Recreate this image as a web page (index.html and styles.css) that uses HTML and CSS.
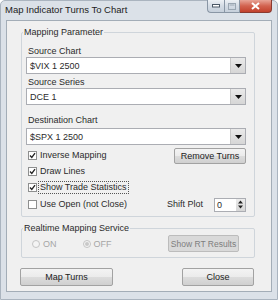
FILE: index.html
```html
<!DOCTYPE html>
<html>
<head>
<meta charset="utf-8">
<link rel="stylesheet" href="styles.css">
</head>
<body>
<div class="window">
  <div class="titlebar">
    <span class="title">Map Indicator Turns To Chart</span>
    <div class="caption-btns">
      <span class="cbtn min"><svg width="8" height="4" viewBox="0 0 8 4"><rect x="0.5" y="0.5" width="7" height="2.5" fill="#fff" stroke="#4b5866"/></svg></span>
      <span class="cbtn max"><svg width="8" height="7" viewBox="0 0 8 7"><rect x="0.5" y="0.5" width="7" height="6" fill="none" stroke="#9aa6b2"/><rect x="1.5" y="1.5" width="5" height="1" fill="#9aa6b2"/></svg></span>
      <span class="cbtn close"><svg width="9" height="8" viewBox="0 0 9 8"><path d="M1 1 L8 7 M8 1 L1 7" stroke="#fff" stroke-width="2"/></svg></span>
    </div>
  </div>
  <div class="client">
    <div class="group group1">
      <span class="legend">Mapping Parameter</span>
      <div class="lbl l1">Source Chart</div>
      <div class="combo c1"><span class="val">$VIX 1 2500</span><span class="arrow"><svg width="7" height="4" viewBox="0 0 7 4"><path d="M0 0 H7 L3.5 4 Z" fill="#111"/></svg></span></div>
      <div class="lbl l2">Source Series</div>
      <div class="combo c2"><span class="val">DCE 1</span><span class="arrow"><svg width="7" height="4" viewBox="0 0 7 4"><path d="M0 0 H7 L3.5 4 Z" fill="#111"/></svg></span></div>
      <div class="lbl l3">Destination Chart</div>
      <div class="combo c3"><span class="val">$SPX 1 2500</span><span class="arrow"><svg width="7" height="4" viewBox="0 0 7 4"><path d="M0 0 H7 L3.5 4 Z" fill="#111"/></svg></span></div>
      <div class="row r1">
        <span class="chk on"><svg width="7" height="7" viewBox="0 0 7 7"><path d="M1 3.5 L2.8 5.5 L6 1.2" fill="none" stroke="#222" stroke-width="1.3"/></svg></span>
        <span class="ctext">Inverse Mapping</span>
        <span class="btn remove">Remove Turns</span>
      </div>
      <div class="row r2">
        <span class="chk on"><svg width="7" height="7" viewBox="0 0 7 7"><path d="M1 3.5 L2.8 5.5 L6 1.2" fill="none" stroke="#222" stroke-width="1.3"/></svg></span>
        <span class="ctext">Draw Lines</span>
      </div>
      <div class="row r3">
        <span class="chk on"><svg width="7" height="7" viewBox="0 0 7 7"><path d="M1 3.5 L2.8 5.5 L6 1.2" fill="none" stroke="#222" stroke-width="1.3"/></svg></span>
        <span class="ctext focus">Show Trade Statistics</span>
      </div>
      <div class="row r4">
        <span class="chk"></span>
        <span class="ctext">Use Open (not Close)</span>
        <span class="shift-lbl">Shift Plot</span>
        <span class="spin"><span class="val">0</span><span class="arrows"><svg width="5" height="9" viewBox="0 0 5 9"><path d="M0 3.5 H5 L2.5 0.5 Z M0 5.5 H5 L2.5 8.5 Z" fill="#222"/></svg></span></span>
      </div>
    </div>
    <div class="group group2">
      <span class="legend">Realtime Mapping Service</span>
      <div class="row rt">
        <span class="radio"></span><span class="rtext on-t">ON</span>
        <span class="radio sel"><span class="dot"></span></span><span class="rtext">OFF</span>
        <span class="btn disabled showrt">Show RT Results</span>
      </div>
    </div>
    <div class="footer">
      <span class="btn mapturns">Map Turns</span>
      <span class="btn close-btn">Close</span>
    </div>
  </div>
</div>
</body>
</html>
```
FILE: styles.css
```css
* { box-sizing: border-box; }
html, body { margin: 0; padding: 0; }
body {
  width: 278px;
  height: 300px;
  background: #fff;
  font-family: "Liberation Sans", Arial, sans-serif;
  font-size: 9px;
  color: #2b2b2b;
}
.window {
  width: 278px;
  height: 300px;
  background: #dbe1e8;
  border: 1px solid #aab4bf;
  border-radius: 5px 5px 0 0;
  display: flex;
  flex-direction: column;
}
.titlebar {
  height: 19px;
  display: flex;
  align-items: flex-start;
  justify-content: space-between;
}
.title {
  font-size: 9.5px;
  color: #222;
  margin: 3px 0 0 4px;
  line-height: 12px;
}
.caption-btns {
  display: flex;
  margin: -1px 5px 0 0;
  height: 13px;
}
.cbtn {
  display: flex;
  align-items: center;
  justify-content: center;
  height: 13px;
  border: 1px solid #8996a5;
  border-top: none;
  background: linear-gradient(#edf1f5, #d3dbe4 50%, #c6d0db);
}
.cbtn.min { width: 17px; border-radius: 0 0 0 4px; border-right: none; }
.cbtn.max { width: 16px; }
.cbtn.close {
  width: 32px;
  border-color: #8a3a30;
  border-left: none;
  border-radius: 0 0 4px 0;
  background: linear-gradient(#e8a497, #d2624f 50%, #c2412d);
}
.client {
  margin: 0 5px 0 5px;
  height: 272px;
  background: #f0f0f0;
  border: 1px solid #a3adb7;
  display: flex;
  flex-direction: column;
}
.group {
  position: relative;
  border: 1px solid #cfd5db;
  border-radius: 2px;
  margin-left: 14px;
  width: 234px;
}
.legend {
  position: absolute;
  top: -7px;
  left: 1px;
  padding: 0 1px;
  background: #f0f0f0;
  line-height: 12px;
  white-space: nowrap;
}
.group1 {
  margin-top: 11px;
  height: 185px;
  padding: 0 8px 0 4px;
}
.lbl { line-height: 10px; padding-left: 2px; }
.l1 { margin-top: 13px; }
.l2 { margin-top: 3px; }
.l3 { margin-top: 10px; }
.combo {
  height: 17px;
  background: #fff;
  border: 1px solid #abadb3;
  display: flex;
  align-items: center;
  justify-content: space-between;
  margin-top: 1px;
}
.c3 { margin-top: 3px; }
.combo .val { padding-left: 3px; line-height: 12px; }
.combo .arrow {
  width: 15px;
  height: 15px;
  background: linear-gradient(#eaeaea, #d6d6d6);
  border-left: 1px solid #c8c8c8;
  display: flex;
  align-items: center;
  justify-content: center;
}
.row {
  display: flex;
  align-items: center;
  height: 16px;
  padding-left: 2px;
  white-space: nowrap;
}
.r1 { margin-top: 2px; }
.r4 { height: 18px; }
.chk {
  width: 9px;
  height: 9px;
  background: #fff;
  border: 1px solid #8e8f8f;
  display: flex;
  align-items: center;
  justify-content: center;
  flex: none;
}
.ctext { margin-left: 2px; line-height: 11px; padding: 0 1px; }
.ctext.focus { outline: 1px dotted #555; outline-offset: 0; }
.btn {
  display: flex;
  align-items: center;
  justify-content: center;
  border: 1px solid #a2a2a2;
  border-radius: 2px;
  background: linear-gradient(#f3f3f3, #ebebeb 50%, #dcdcdc 51%, #d0d0d0);
  color: #222;
  white-space: nowrap;
}
.remove {
  margin-left: auto;
  width: 72px;
  height: 16px;
  margin-top: 2px;
}
.shift-lbl { margin-left: auto; }
.spin {
  margin-left: 11px;
  width: 32px;
  height: 14px;
  background: #fff;
  border: 1px solid #abadb3;
  display: flex;
  align-items: center;
  justify-content: space-between;
  margin-top: 1px;
}
.spin .val { padding-left: 2px; }
.spin .arrows {
  width: 9px;
  height: 12px;
  background: linear-gradient(#ececec, #d6d6d6);
  display: flex;
  align-items: center;
  justify-content: center;
}
.group2 {
  margin-top: 11px;
  height: 30px;
  padding: 0 15px 0 10px;
}
.rt { margin-top: 6px; height: 17px; padding-left: 0; }
.radio {
  width: 8px;
  height: 8px;
  border-radius: 50%;
  border: 1px solid #c4c4c4;
  background: #f4f4f4;
  display: flex;
  align-items: center;
  justify-content: center;
  flex: none;
}
.radio .dot { width: 4px; height: 4px; border-radius: 50%; background: #c8c8c8; }
.rtext { color: #a6a6a6; margin-left: 3px; }
.on-t { margin-right: 26px; }
.showrt {
  margin-left: auto;
  width: 71px;
  height: 17px;
  background: #d9d9d9;
  border-color: #bcbcbc;
  color: #7e7e7e;
  font-size: 8.5px;
}
.footer {
  display: flex;
  justify-content: space-between;
  margin: 10px 17px 0 13px;
}
.mapturns { width: 93px; height: 18px; }
.close-btn { width: 72px; height: 18px; }
```
